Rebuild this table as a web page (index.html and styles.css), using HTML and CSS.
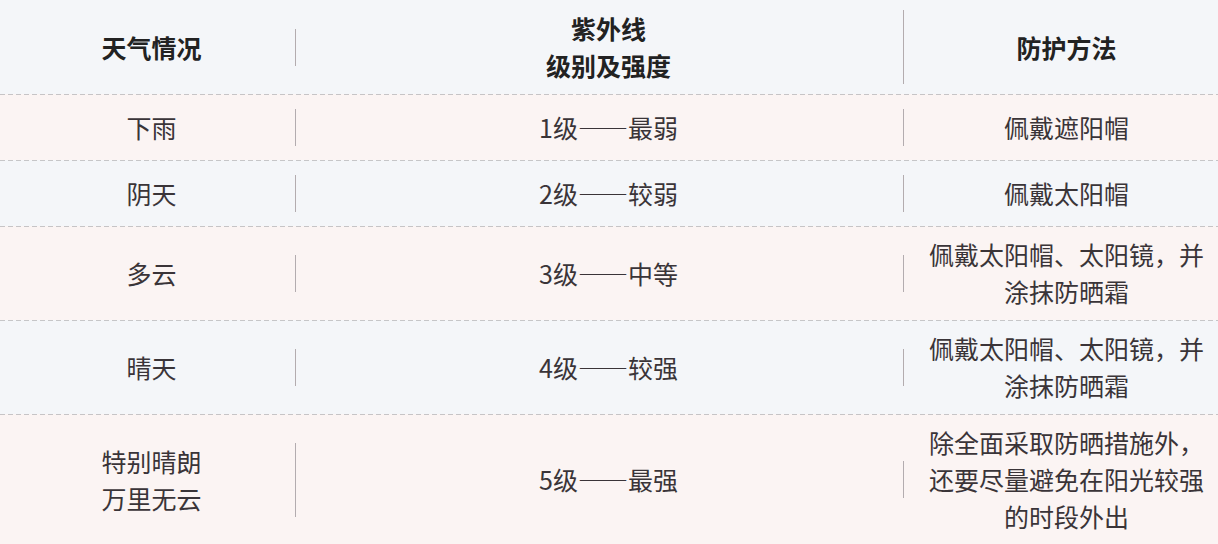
FILE: index.html
```html
<!DOCTYPE html>
<html lang="zh-CN">
<head>
<meta charset="utf-8">
<title>紫外线防护</title>
<link rel="stylesheet" href="styles.css">
</head>
<body>
<div class="table">
  <div class="row head">
    <div class="cell c1"><div class="box sep">天气情况</div></div>
    <div class="cell c2"><div class="box sep">紫外线<br>级别及强度</div></div>
    <div class="cell c3"><div class="box">防护方法</div></div>
  </div>
  <div class="row pink">
    <div class="cell c1"><div class="box sep">下雨</div></div>
    <div class="cell c2"><div class="box sep">1级——最弱</div></div>
    <div class="cell c3"><div class="box">佩戴遮阳帽</div></div>
  </div>
  <div class="row blue">
    <div class="cell c1"><div class="box sep">阴天</div></div>
    <div class="cell c2"><div class="box sep">2级——较弱</div></div>
    <div class="cell c3"><div class="box">佩戴太阳帽</div></div>
  </div>
  <div class="row pink">
    <div class="cell c1"><div class="box sep">多云</div></div>
    <div class="cell c2"><div class="box sep">3级——中等</div></div>
    <div class="cell c3"><div class="box">佩戴太阳帽、太阳镜，并涂抹防晒霜</div></div>
  </div>
  <div class="row blue">
    <div class="cell c1"><div class="box sep">晴天</div></div>
    <div class="cell c2"><div class="box sep">4级——较强</div></div>
    <div class="cell c3"><div class="box">佩戴太阳帽、太阳镜，并涂抹防晒霜</div></div>
  </div>
  <div class="row pink">
    <div class="cell c1"><div class="box sep">特别晴朗<br>万里无云</div></div>
    <div class="cell c2"><div class="box sep">5级——最强</div></div>
    <div class="cell c3"><div class="box">除全面采取防晒措施外，还要尽量避免在阳光较强的时段外出</div></div>
  </div>
</div>
</body>
</html>
```

FILE: styles.css
```css
html, body {
  margin: 0;
  padding: 0;
}

body {
  width: 1218px;
  height: 544px;
  overflow: hidden;
  background: #f4f6f9;
  font-family: "Noto Sans CJK SC", "Noto Sans", sans-serif;
  font-size: 25px;
  color: #3a3438;
}

.table {
  display: flex;
  flex-direction: column;
}

.row {
  display: grid;
  grid-template-columns: 296px 608px 314px;
  align-items: center;
  box-sizing: border-box;
  min-height: 66px;
  padding: 10px 0;
  background-repeat: no-repeat;
  background-size: 100% 1px;
  background-position: 0 0;
}

.head {
  background-color: #f4f6f9;
  color: #222;
  font-weight: 700;
}

.pink {
  background-color: #fbf4f3;
  background-image: repeating-linear-gradient(to right, #c6c4c6 0 5px, transparent 5px 8px);
}

.blue {
  background-color: #f4f6f9;
  background-image: repeating-linear-gradient(to right, #c6c6c8 0 5px, transparent 5px 8px);
}

.cell {
  box-sizing: border-box;
}

.c1 {
  padding-left: 8px;
}

.c2 {
  padding-left: 18px;
}

.c3 {
  padding-left: 18px;
  padding-right: 7px;
}

.box {
  line-height: 37px;
  text-align: center;
}

.sep {
  border-right: 1px solid #b3acaf;
}
```
